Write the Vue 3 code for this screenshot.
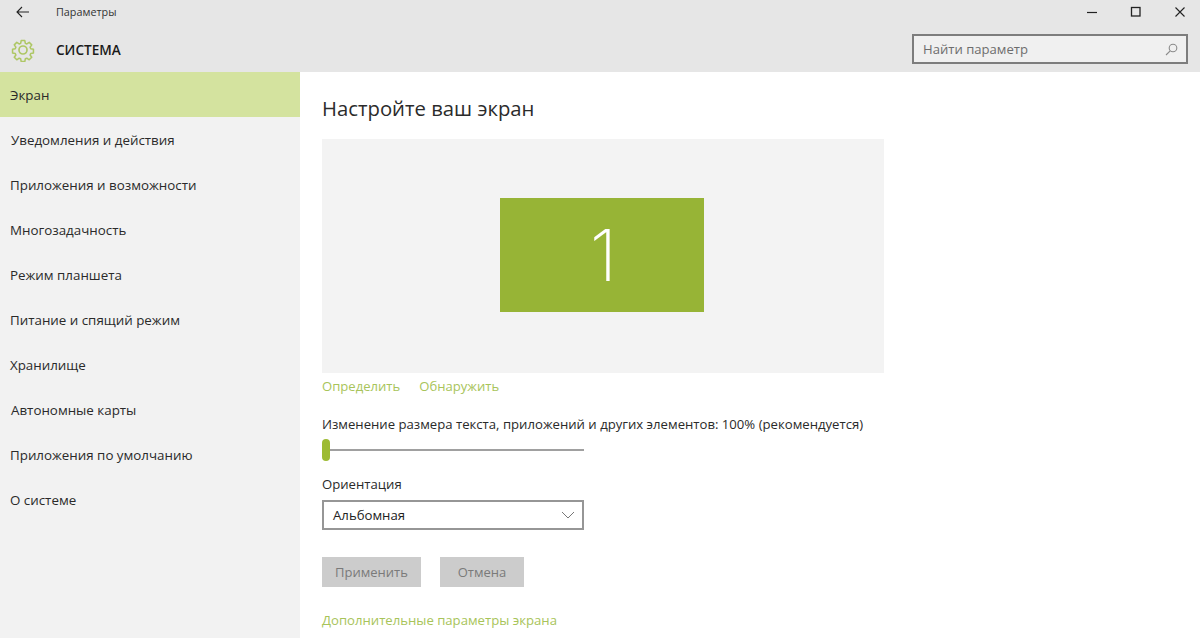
<script setup>
const items = [
  { label: 'Экран', active: true },
  { label: 'Уведомления и действия', nudge: true },
  { label: 'Приложения и возможности' },
  { label: 'Многозадачность' },
  { label: 'Режим планшета' },
  { label: 'Питание и спящий режим' },
  { label: 'Хранилище' },
  { label: 'Автономные карты', nudge: true },
  { label: 'Приложения по умолчанию' },
  { label: 'О системе' }
]
</script>

<template>
  <div class="window">
    <header class="header">
      <div class="titlebar">
        <svg class="back" width="14" height="12" viewBox="0 0 14 12" fill="none" stroke="#222" stroke-width="1.1">
          <path d="M13 6H1M6 1 1 6l5 5" />
        </svg>
        <span class="app-title">Параметры</span>
        <div class="controls">
          <svg width="12" height="12" viewBox="0 0 12 12" fill="none" stroke="#222" stroke-width="1.2"><path d="M1 6.500h10" /></svg>
          <svg width="12" height="12" viewBox="0 0 12 12" fill="none" stroke="#222" stroke-width="1.3"><rect x="1.500" y="1.500" width="8.500" height="8.500" /></svg>
          <svg width="12" height="12" viewBox="0 0 12 12" fill="none" stroke="#222" stroke-width="1.1"><path d="m1.500 1.500 9 9M10.500 1.500l-9 9" /></svg>
        </div>
      </div>
      <div class="sectionbar">
        <svg class="gear" width="24" height="24" viewBox="0 0 24 24" fill="none" stroke="#aec765" stroke-width="1.700" stroke-linejoin="round">
          <path d="M10 1.500h4l.6 3.100 1.700.7 2.600-1.800 2.800 2.800-1.800 2.600.7 1.700 3 .6v4l-3 .6-.7 1.700 1.800 2.600-2.800 2.800-2.600-1.800-1.700.7-.6 3h-4l-.6-3-1.700-.7-2.600 1.800-2.800-2.800 1.800-2.600-.7-1.700-3-.6v-4l3-.6.7-1.700L2.300 6.300l2.800-2.800 2.600 1.800 1.700-.7z" transform="translate(1.200 1.200) scale(.9)" />
          <circle cx="12" cy="12" r="4" />
        </svg>
        <span class="section-title">СИСТЕМА</span>
        <div class="search">
          <span>Найти параметр</span>
          <svg width="13" height="13" viewBox="0 0 13 13" fill="none" stroke="#8a8a8a" stroke-width="1.100"><circle cx="8" cy="5" r="3.800" /><path d="M5.200 7.800 1 12" /></svg>
        </div>
      </div>
    </header>
    <div class="body">
      <nav class="sidebar">
        <div v-for="item in items" :key="item.label" class="nav-item" :class="{ active: item.active, nudge: item.nudge }">{{ item.label }}</div>
      </nav>
      <main class="main">
        <h1>Настройте ваш экран</h1>
        <div class="preview">
          <div class="monitor"><span>1</span></div>
        </div>
        <div class="links">
          <span>Определить</span>
          <span>Обнаружить</span>
        </div>
        <div class="label scale-label">Изменение размера текста, приложений и других элементов: 100% (рекомендуется)</div>
        <div class="slider"><div class="thumb"></div></div>
        <div class="label orient-label">Ориентация</div>
        <div class="select">
          <span>Альбомная</span>
          <svg width="14" height="8" viewBox="0 0 14 8" fill="none" stroke="#777" stroke-width="1"><path d="m1 1 6 6 6-6" /></svg>
        </div>
        <div class="buttons">
          <div class="btn apply">Применить</div>
          <div class="btn cancel">Отмена</div>
        </div>
        <div class="advanced">Дополнительные параметры экрана</div>
      </main>
    </div>
  </div>
</template>

<style>
html, body { margin: 0; background: #fff; }
</style>

<style scoped>
.window {
  width: 1200px;
  height: 638px;
  overflow: hidden;
  display: flex;
  flex-direction: column;
  font-family: "Open Sans", "Noto Sans", sans-serif;
  color: #222;
  background: #fff;
}
.header {
  height: 72px;
  background: #e6e6e6;
  flex: none;
}
.titlebar {
  height: 24px;
  display: flex;
  align-items: center;
}
.back { margin-left: 16px; }
.app-title {
  margin-left: 26px;
  margin-bottom: 1px;
  font-size: 10.8px;
  color: #333;
}
.controls {
  margin-left: auto;
  margin-right: 14px;
  display: flex;
  gap: 32px;
  align-items: center;
}
.sectionbar {
  height: 44px;
  padding-top: 4px;
  display: flex;
  align-items: center;
}
.gear { margin-left: 11px; }
.section-title {
  margin-left: 21px;
  margin-bottom: 2px;
  font-size: 13.6px;
  font-weight: 600;
  color: #1a1a1a;
}
.search {
  margin-left: auto;
  margin-right: 12px;
  margin-top: -2px;
  width: 276px;
  height: 30px;
  box-sizing: border-box;
  border: 2px solid #7d7d7d;
  background: #f0f0f0;
  display: flex;
  align-items: center;
  justify-content: space-between;
  padding: 0 8px 0 9px;
  font-size: 13.1px;
  color: #6d6d6d;
}
.body {
  flex: 1;
  display: flex;
  min-height: 0;
}
.sidebar {
  width: 300px;
  flex: none;
  background: #f2f2f2;
}
.nav-item {
  height: 45px;
  padding-left: 10px;
  box-sizing: border-box;
  display: flex;
  align-items: center;
  font-size: 13.35px;
  color: #2a2a2a;
}
.nav-item.nudge { padding-left: 11px; }
.nav-item.active { background: #d4e39f; }
.main {
  flex: 1;
  padding-left: 22px;
}
h1 {
  margin: 21px 0 0;
  height: 46px;
  font-size: 20.3px;
  line-height: 30px;
  font-weight: 400;
  color: #2b2b2b;
}
.preview {
  width: 562px;
  height: 234px;
  background: #f3f3f3;
  display: flex;
  align-items: center;
  justify-content: center;
}
.monitor {
  width: 204px;
  height: 114px;
  margin-right: 2px;
  margin-bottom: 2px;
  padding-left: 3px;
  box-sizing: border-box;
  background: #97b436;
  color: #fff;
  display: flex;
  align-items: center;
  justify-content: center;
  font-family: Inter, Roboto, sans-serif;
  font-weight: 200;
  font-size: 72px;
  line-height: 1;
}
.links {
  margin-top: 3px;
  display: flex;
  gap: 19px;
  height: 20px;
  line-height: 20px;
  font-size: 13.1px;
  color: #a8c45a;
}
.label {
  font-size: 13.15px;
  line-height: 20px;
  color: #2a2a2a;
}
.scale-label { margin-top: 18px; }
.slider {
  position: relative;
  width: 262px;
  height: 2px;
  margin-top: 15px;
  background: #a0a0a0;
}
.thumb {
  position: absolute;
  left: 0;
  top: -10px;
  width: 8px;
  height: 22px;
  border-radius: 4px;
  background: #9dbb33;
}
.orient-label { margin-top: 23px; }
.select {
  margin-top: 6px;
  width: 262px;
  height: 30px;
  box-sizing: border-box;
  border: 2px solid #969696;
  display: flex;
  align-items: center;
  justify-content: space-between;
  padding: 0 7px 0 9px;
  font-size: 13.2px;
  color: #222;
}
.buttons {
  margin-top: 27px;
  display: flex;
  gap: 19px;
}
.btn {
  height: 30px;
  background: #cccccc;
  color: #7a7a7a;
  font-size: 13px;
  display: flex;
  align-items: center;
  justify-content: center;
}
.apply { width: 99px; }
.cancel { width: 84px; }
.advanced {
  margin-top: 23px;
  font-size: 13.15px;
  line-height: 20px;
  color: #a8c45a;
}
</style>
